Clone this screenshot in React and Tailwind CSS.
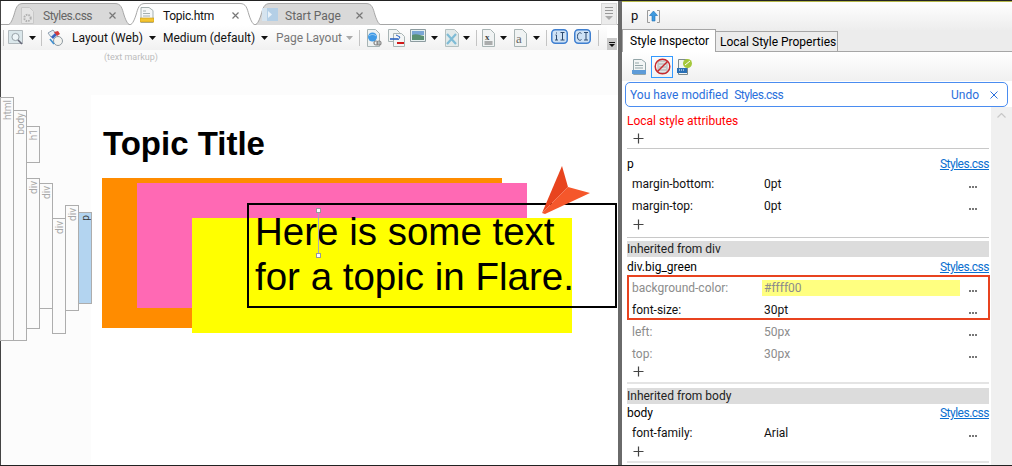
import React from 'react';

const Caret = ({ className = '' }) => (
  <svg width="7" height="4" viewBox="0 0 7 4" className={`shrink-0 ${className}`}>
    <path d="M0 0h7L3.5 4z" fill="#111" />
  </svg>
);

const Sep = ({ className = '' }) => <div className={`w-px h-[16px] bg-[#c4c4c4] shrink-0 ${className}`} />;

const TabShape = ({ width, active }) => (
  <svg width={width} height="24" viewBox={`0 0 ${width} 24`} className="absolute left-0 top-0">
    <path
      d={`M0 23.5C4 23.5 6 19 8 13C10 6 11 1.5 17 1.5H${width - 17}C${width - 11} 1.5 ${width - 10} 6 ${width - 8} 13C${width - 6} 19 ${width - 4} 23.5 ${width} 23.5`}
      fill={active ? '#ffffff' : '#d9d9d9'}
      stroke="#a6a6a6"
    />
  </svg>
);

const Tab = ({ width, left, active, icon, iconLeft, label, close, textLeft, labelClass }) => (
  <div className="absolute top-[1px] h-[24px]" style={{ left, width }}>
    <TabShape width={width} active={active} />
    <div className="absolute top-[5px]" style={{ left: iconLeft }}>{icon}</div>
    <span className={`absolute top-[4px] text-[12px] leading-[20px] whitespace-nowrap ${labelClass}`} style={{ left: textLeft }}>{label}</span>
    {close && (
      <svg width="7" height="7" viewBox="0 0 7 7" className="absolute top-[10px]" style={{ left: close }}>
        <path d="M.5.5l6 6M6.5.5l-6 6" stroke="#777" strokeWidth="1.2" />
      </svg>
    )}
  </div>
);

const tagBars = [
  { name: 'html', cls: 'left-0 top-[97px] w-[14px] h-[244px]' },
  { name: 'body', cls: 'left-[13px] top-[110px] w-[14px] h-[231px]' },
  { name: 'h1', cls: 'left-[26px] top-[126px] w-[14px] h-[37px]' },
  { name: 'div', cls: 'left-[26px] top-[178px] w-[14px] h-[151px]' },
  { name: 'div', cls: 'left-[39px] top-[183px] w-[14px] h-[126px]' },
  { name: 'div', cls: 'left-[52px] top-[218px] w-[14px] h-[116px]' },
  { name: 'div', cls: 'left-[65px] top-[205px] w-[14px] h-[106px]' },
];

const TagBar = ({ name, cls, active }) => (
  <div className={`absolute border border-[#adadad] ${active ? 'bg-[#b3d4f0] text-[#333]' : 'bg-[#fbfbfb] text-[#a8a8a8]'} ${cls}`}>
    <span className="absolute left-[1px] top-[2px] text-[10px] leading-[11px] [writing-mode:vertical-rl] rotate-180">{name}</span>
  </div>
);

const Plus = () => (
  <svg width="11" height="11" viewBox="0 0 11 11">
    <path d="M5.5.5v10M.5 5.5h10" stroke="#444" strokeWidth="1.2" />
  </svg>
);

const PlusRow = ({ className = '' }) => (
  <div className={`h-[14px] flex items-center pl-[6px] ${className}`}><Plus /></div>
);

const Head = ({ title, h = 'h-[18px]' }) => (
  <div className={`${h} flex items-center justify-between text-[12px] text-black`}>
    <span>{title}</span>
    <span className="text-[#0b6fd0] underline tracking-[-0.5px]">Styles.css</span>
  </div>
);

const Prop = ({ name, value, dim, hilite }) => (
  <div className={`relative h-[22px] flex items-center text-[12px] ${dim ? 'text-[#8c8c8c]' : 'text-[#111]'}`}>
    <span className="w-[137px] pl-[5px]">{name}</span>
    {hilite ? (
      <span className="w-[198px] ml-[-2px] pl-[2px] h-[16px] bg-[#ffff80] flex items-center">{value}</span>
    ) : (
      <span className="ml-[-2px] pl-[2px]">{value}</span>
    )}
    <svg width="8" height="2" viewBox="0 0 8 2" className="absolute left-[342px] top-[13px]">
      <path d="M0 0h2v2H0zM3 0h2v2H3zM6 0h2v2H6z" fill="#777" />
    </svg>
  </div>
);

const Bar = ({ title }) => (
  <div className="h-[16px] bg-[#dcdcdc] flex items-center text-[12px] text-[#222]">{title}</div>
);

export default function App() {
  return (
    <div className="relative w-[1012px] h-[466px] flex bg-white overflow-hidden border-t border-b border-[#222] font-['Roboto','Noto_Sans',sans-serif]">
      {/* editor pane */}
      <div className="w-[618px] h-full flex flex-col border-l border-[#444] shrink-0">
        <div className="relative h-[24px] shrink-0 bg-white border-b border-[#a6a6a6]">
          <Tab
            width={126} left={5} label="Styles.css" textLeft={37} iconLeft={14} close={103} labelClass="text-[#666] tracking-[-0.5px]"
            icon={
              <svg width="15" height="17" viewBox="0 0 15 17">
                <path d="M1.5.5h8l4 4v12h-12z" fill="#e4e4e4" stroke="#c8c8c8" />
                <circle cx="7.5" cy="11" r="3.2" fill="none" stroke="#b0b0b0" strokeWidth="2" strokeDasharray="1.6 1" />
              </svg>
            }
          />
          <Tab
            width={130} left={252} label="Start Page" textLeft={32} iconLeft={9} close={103} labelClass="text-[#666]"
            icon={
              <svg width="16" height="13" viewBox="0 0 16 13" className="mt-[1px]">
                <path d="M0 0h16v13H0z" fill="#b4cfe6" />
                <path d="M0 0h5v13H0z" fill="#d6e4ef" />
                <path d="M6 3l4 3.5L6 10z" fill="#eaf3fa" />
              </svg>
            }
          />
          <Tab
            width={129} left={127} active label="Topic.htm" textLeft={35} iconLeft={12} close={104} labelClass="text-[#111] tracking-[-0.3px]"
            icon={
              <svg width="14" height="16" viewBox="0 0 14 16">
                <path d="M1 .5h8l4 3v12H1z" fill="#f5f7f7" stroke="#a5b0b0" />
                <path d="M3 4h3M3 6.5h7M3 9h7" stroke="#a5b0b0" />
                <path d="M0 11h14v4H0z" fill="#f4c430" stroke="#c79a18" strokeWidth=".6" />
              </svg>
            }
          />
          <div className="absolute left-[600px] top-[2px] w-[16px] h-[22px] bg-[#ececec] border border-[#d8d8d8] flex flex-col items-center pt-[3px] gap-[2px]">
            <div className="w-[8px] h-px bg-[#999]" />
            <div className="w-[8px] h-px bg-[#999]" />
            <div className="w-[8px] h-px bg-[#999]" />
            <svg width="8" height="4" viewBox="0 0 8 4"><path d="M0 0h8L4 4z" fill="#aaa" /></svg>
          </div>
        </div>

        <div className="relative h-[25px] w-[606px] shrink-0 flex items-center bg-gradient-to-b from-white to-[#f1f1f1] text-[12px] text-[#111]">
          <Sep className="ml-[2px]" />
          <svg width="17" height="15" viewBox="0 0 17 15" className="ml-[4px] shrink-0">
            <path d="M.5.5h14v13H.5z" fill="#dbe7eb" stroke="#b0b8bc" />
            <circle cx="7.5" cy="7" r="3.6" fill="#eef5f8" stroke="#98a2a8" />
            <path d="M10 10l4 4" stroke="#667" strokeWidth="1.6" />
          </svg>
          <Caret className="ml-[4px]" />
          <Sep className="ml-[5px]" />
          <svg width="18" height="18" viewBox="0 0 18 18" className="ml-[5px] shrink-0">
            <path d="M1 4l5-3 3 4-5 3z" fill="#e8eef4" stroke="#8fa0b0" />
            <path d="M4 8l5-5 2 2-5 5z" fill="#3a66c2" />
            <path d="M7 3l4-1 2 3-3 2z" fill="#d43c3c" />
            <circle cx="11" cy="12" r="4.5" fill="#f2f2ee" stroke="#8f9aa2" />
            <path d="M3 10l4 5" stroke="#3f8fd0" strokeWidth="1.6" />
          </svg>
          <span className="ml-[7px] w-[71px] shrink-0 whitespace-nowrap">Layout (Web)</span>
          <Caret className="ml-[6px]" />
          <span className="ml-[7px] w-[93px] shrink-0 whitespace-nowrap">Medium (default)</span>
          <Caret className="ml-[5px]" />
          <span className="ml-[8px] w-[65px] shrink-0 whitespace-nowrap text-[#777]">Page Layout</span>
          <svg width="7" height="4" viewBox="0 0 7 4" className="ml-[5px] shrink-0"><path d="M0 0h7L3.5 4z" fill="#aaa" /></svg>
          <Sep className="ml-[6px]" />
          <svg width="16" height="18" viewBox="0 0 16 18" className="ml-[6px] shrink-0">
            <path d="M1.5.5h8l4 4v13h-12z" fill="#eef2f2" stroke="#a8b4b4" />
            <circle cx="6.5" cy="8" r="4.5" fill="#3f9ae6" />
            <path d="M3 7c2-2 5-2 7 0" stroke="#9fd0f5" fill="none" />
            <circle cx="10" cy="14" r="2" fill="none" stroke="#888" strokeWidth="1.2" />
            <circle cx="13" cy="14" r="2" fill="none" stroke="#888" strokeWidth="1.2" />
          </svg>
          <svg width="17" height="18" viewBox="0 0 17 18" className="ml-[6px] shrink-0">
            <path d="M.5.5h8l3 3v9h-11z" fill="#f3f5f5" stroke="#a8b4b4" />
            <path d="M5.5 4.500h8l3 3v10h-11z" fill="#f3f5f5" stroke="#a8b4b4" />
            <path d="M2 10h8" stroke="#2860c0" strokeWidth="1.6" />
            <path d="M8 6l4 2-2 3" stroke="#2860c0" fill="none" />
            <path d="M9 14h7" stroke="#d01818" strokeWidth="2" />
          </svg>
          <svg width="16" height="13" viewBox="0 0 16 13" className="ml-[5px] shrink-0 -mt-[4px]">
            <path d="M.5.5h15v12H.5z" fill="#e6f0f0" stroke="#8d9ca0" />
            <path d="M2 2h12v4H2z" fill="#7aa6d4" />
            <path d="M2 6c4-2 8 0 12 1v4H2z" fill="#5a9072" />
          </svg>
          <Caret className="ml-[5px]" />
          <svg width="16" height="18" viewBox="0 0 16 18" className="ml-[6px] shrink-0">
            <path d="M1.500.5h9l4 4v13h-13z" fill="#e2eaea" stroke="#b4c0c0" />
            <path d="M3 5l9 10M12 5L3 15" stroke="#7fbcd6" strokeWidth="2.2" />
          </svg>
          <Caret className="ml-[3px]" />
          <Sep className="ml-[6px]" />
          <svg width="13" height="18" viewBox="0 0 13 18" className="ml-[5px] shrink-0">
            <path d="M.5.5h8l4 4v13H.5z" fill="#f0f3f3" stroke="#a8b4b4" />
            <text x="3" y="11" fontSize="9" fontWeight="700" fontFamily="Liberation Serif, serif" fill="#444">x</text>
            <path d="M2.500 13h8M2.500 15h8" stroke="#666" />
          </svg>
          <Caret className="ml-[5px]" />
          <svg width="13" height="18" viewBox="0 0 13 18" className="ml-[7px] shrink-0">
            <path d="M.5.5h8l4 4v13H.5z" fill="#f0f3f3" stroke="#a8b4b4" />
            <text x="2" y="14" fontSize="13" fontFamily="Liberation Serif, serif" fill="#666">a</text>
          </svg>
          <Caret className="ml-[6px]" />
          <Sep className="ml-[6px]" />
          <svg width="17" height="15" viewBox="0 0 17 15" className="ml-[4px] shrink-0 -mt-[3px]">
            <rect x=".75" y=".75" width="15.5" height="13.5" rx="3.5" fill="#cfe2f5" stroke="#3f7fd0" strokeWidth="1.5" />
            <path d="M5.500 3.500v1M4.500 6h1v5M4 11h3M9.500 3.500h4M11.500 3.500v7.500M9.500 11h4" stroke="#2c4a70" fill="none" />
          </svg>
          <svg width="17" height="15" viewBox="0 0 17 15" className="ml-[6px] shrink-0 -mt-[3px]">
            <rect x=".75" y=".75" width="15.5" height="13.5" rx="3.5" fill="#cfe2f5" stroke="#3f7fd0" strokeWidth="1.5" />
            <path d="M7.500 4.500C6.500 3.200 3.500 3.200 3.500 7.500s3 4.300 4 3M10 3.500h4M12 3.500V11M10 11h4" stroke="#2c4a70" fill="none" />
          </svg>
          <Sep className="ml-[7px]" />
          <div className="absolute right-[-10px] bottom-0 w-[10px] h-[12px] bg-[#c9c9c9] flex flex-col items-center justify-center gap-[1px]">
            <div className="w-[6px] h-px bg-[#111]" />
            <svg width="6" height="3" viewBox="0 0 6 3"><path d="M0 0h6L3 3z" fill="#111" /></svg>
          </div>
        </div>

        <div className="relative flex-1 bg-white">
          <div className="absolute left-0 right-0 top-0 h-[45px] bg-[#fcfcfc]" />
          <div className="absolute left-0 top-0 w-[90px] h-full bg-[#fcfcfc]" />
        </div>
      </div>

      {/* canvas items sit over the editor pane */}
      <div className="absolute left-0 -top-px w-[618px] h-[466px] pointer-events-none">
        <span className="absolute left-[104px] top-[51px] text-[9px] leading-[12px] text-[#bdbdbd] whitespace-nowrap">(text markup)</span>
        {tagBars.map((b, i) => <TagBar key={i} {...b} />)}
        <TagBar name="p" cls="left-[78px] top-[212px] w-[14px] h-[92px]" active />
        <h1 className="absolute left-[103px] top-[125px] text-[33px] leading-[37px] font-bold text-black font-['Liberation_Sans',sans-serif]">Topic Title</h1>
        <div className="absolute left-[102px] top-[178px] w-[400px] h-[150px] bg-[#ff8c00]" />
        <div className="absolute left-[137px] top-[183px] w-[390px] h-[125px] bg-[#ff69b4]" />
        <div className="absolute left-[192px] top-[218px] w-[380px] h-[115px] bg-[#ffff00]" />
        <div className="absolute left-[247px] top-[203px] w-[370px] h-[105px] border-2 border-black pl-[6px] pt-[4px] text-[38.5px] leading-[45px] text-black font-['Liberation_Sans',sans-serif] whitespace-nowrap">
          <p>Here is some text</p>
          <p>for a topic in Flare.</p>
        </div>
        <div className="absolute left-[318px] top-[210px] w-px h-[45px] bg-[#a9a9b5]" />
        <div className="absolute left-[316px] top-[208px] w-[5px] h-[5px] bg-white border border-[#999]" />
        <div className="absolute left-[316px] top-[253px] w-[5px] h-[5px] bg-white border border-[#999]" />
        <svg width="50" height="50" viewBox="0 0 50 50" className="absolute left-[541px] top-[165px]">
          <path d="M21 1l6 21-26 26z" fill="#e8441e" />
          <path d="M27 22l22 6-45 21-3-1z" fill="#f5572b" />
        </svg>
      </div>

      <div className="w-[4px] h-full bg-[#6a6a6a] shrink-0" />

      {/* style inspector */}
      <div className="flex-1 min-w-0 h-full flex flex-col text-[12px]">
        <div className="h-[29px] shrink-0 flex items-center pl-[9px] gap-[9px] bg-gradient-to-b from-white to-[#ededed] border-t border-[#b5b84a] text-[13px] text-[#111]">
          <span>p</span>
          <svg width="13" height="13" viewBox="0 0 13 13">
            <path d="M3 .5H.5v12H3M10 .5h2.500v12H10" fill="none" stroke="#9a9a9a" />
            <path d="M6.500 1l4 4.500H8V11H5V5.500H2.500z" fill="#3f9be0" stroke="#1d6fb5" strokeWidth=".6" />
          </svg>
        </div>
        <div className="h-[22px] shrink-0 flex items-end bg-[#ececec] border-b border-[#a6a6a6]">
          <div className="w-[94px] h-[23px] -mb-px bg-white border border-b-0 border-[#a6a6a6] flex items-center pl-[7px] z-10 whitespace-nowrap">Style Inspector</div>
          <div className="w-[122px] h-[20px] border border-b-0 border-l-0 border-[#a6a6a6] flex items-center pl-[4px] whitespace-nowrap">Local Style Properties</div>
        </div>
        <div className="h-[29px] shrink-0 flex items-center pl-[10px] bg-gradient-to-b from-white to-[#f0f0f0]">
          <svg width="14" height="16" viewBox="0 0 14 16">
            <path d="M1.500.5h8l4 3v12h-12z" fill="#f2f5f5" stroke="#93a5a8" />
            <path d="M3 4h4M3 6.500h8M3 9h8" stroke="#93a5a8" />
            <path d="M0 11h14v4H0z" fill="#5d9bd8" />
          </svg>
          <div className="ml-[5px] w-[22px] h-[22px] border border-[#3399ff] flex items-center justify-center">
            <svg width="17" height="17" viewBox="0 0 17 17">
              <path d="M4 3h9v12H4z" fill="#e4e4e4" stroke="#aaa" />
              <path d="M5 6h7M5 9h7M5 12h7" stroke="#aaa" />
              <circle cx="8.500" cy="8.500" r="7.300" fill="none" stroke="#c8282e" strokeWidth="1.500" />
              <path d="M3.500 13.500l10-10" stroke="#c8282e" strokeWidth="1.500" />
            </svg>
          </div>
          <svg width="15" height="16" viewBox="0 0 15 16" className="ml-[4px]">
            <path d="M1.500.5h9v15h-9z" fill="#f2f5f5" stroke="#7d8a8c" />
            <path d="M0 9h10v5H0z" fill="#2a6fb5" />
            <path d="M2 11h6" stroke="#fff" strokeDasharray="1 1" />
            <circle cx="10.500" cy="4.500" r="4.500" fill="#a5c83c" />
            <path d="M8 6l5-4" stroke="#fff" />
          </svg>
        </div>
        <div className="ml-[3px] mr-[4px] mt-[1px] h-[25px] shrink-0 border border-[#4a8cf0] rounded-[5px] flex items-center justify-between pl-[4px] pr-[9px] text-[#2b6fdc]">
          <span>You have modified&nbsp; <span className="tracking-[-0.5px]">Styles.css</span></span>
          <span className="flex items-center gap-[11px]">
            <span>Undo</span>
            <svg width="8" height="8" viewBox="0 0 8 8"><path d="M.500.500l7 7M7.500.500l-7 7" stroke="#2b6fdc" /></svg>
          </span>
        </div>
        <div className="flex-1 min-h-0 flex">
          <div className="w-[369px] pl-[5px] pr-[2px] shrink-0">
            <div className="mt-[3px] h-[21px] flex items-center text-[#ff0000]">Local style attributes</div>
            <PlusRow />
            <div className="mt-[3px] h-px bg-[#c8c8c8]" />
            <div className="mt-[6px]"><Head title="p" /></div>
            <Prop name="margin-bottom:" value="0pt" />
            <Prop name="margin-top:" value="0pt" />
            <PlusRow />
            <div className="mt-[6px] h-px bg-[#c8c8c8]" />
            <div className="mt-[3px]"><Bar title="Inherited from div" /></div>
            <Head title="div.big_green" h="h-[20px]" />
            <div className="relative">
              <Prop name="background-color:" value="#ffff00" dim hilite />
              <Prop name="font-size:" value="30pt" />
              <div className="absolute -top-[2px] left-0 w-[363px] h-[45px] border-2 border-[#e8431f]" />
            </div>
            <Prop name="left:" value="50px" dim />
            <Prop name="top:" value="30px" dim />
            <PlusRow className="-mt-[1px]" />
            <div className="mt-[4px] h-[2px] bg-[#e4e4e4]" />
            <div className="mt-[4px]"><Bar title="Inherited from body" /></div>
            <Head title="body" />
            <Prop name="font-family:" value="Arial" />
            <PlusRow />
            <div className="mt-[3px] h-[2px] bg-[#e4e4e4]" />
          </div>
          <div className="flex-1 bg-[#f0f0f0] flex justify-center pt-[6px]">
            <svg width="9" height="5" viewBox="0 0 9 5"><path d="M.5 4.500l4-4 4 4" fill="none" stroke="#c8c8c8" strokeWidth="1.200" /></svg>
          </div>
        </div>
      </div>
    </div>
  );
}
